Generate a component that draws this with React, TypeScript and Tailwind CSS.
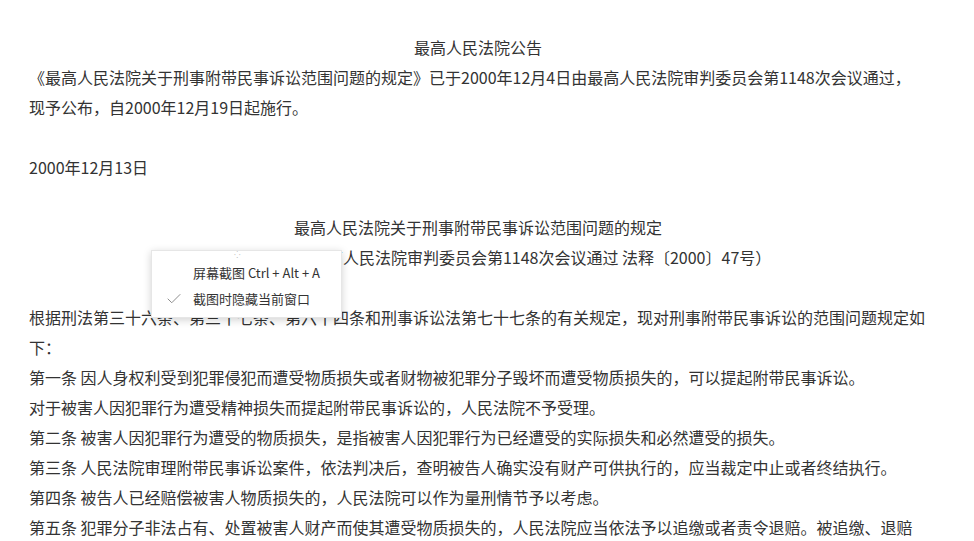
import { Check } from 'lucide-react';

const FONT = { fontFamily: '"Microsoft YaHei", "Noto Sans CJK SC", "Noto Sans", sans-serif' };

function Line({ children, center }: { children?: React.ReactNode; center?: boolean }) {
  return (
    <p className={`h-[30px] leading-[30px] whitespace-nowrap ${center ? 'text-center' : ''}`}>
      {children}
    </p>
  );
}

function ScreenshotMenu() {
  return (
    <div className="absolute left-[151px] top-[250px] w-[191px] h-[68px] bg-white border border-[#e6e6e6] shadow-[0_2px_8px_rgba(0,0,0,0.18)] text-[13px] text-[#333]">
      <div className="absolute left-[82px] top-0 text-[8px] leading-[8px] text-[#bbb]">⁘</div>
      <div className="h-[34px] pt-[13px] pl-[41px] leading-[18px]">屏幕截图 Ctrl + Alt + A</div>
      <div className="flex items-center h-[28px] pl-[13px] leading-[18px]">
        <Check size={18} strokeWidth={1.3} className="text-[#8a8a8a] mr-[10px]" />
        <span>截图时隐藏当前窗口</span>
      </div>
    </div>
  );
}

export default function App() {
  return (
    <div className="relative min-h-screen bg-white text-[#333] text-[16px]" style={FONT}>
      <div className="w-[898px] ml-[29px] pt-[32px]">
        <Line center>最高人民法院公告</Line>
        <Line>《最高人民法院关于刑事附带民事诉讼范围问题的规定》已于2000年12月4日由最高人民法院审判委员会第1148次会议通过，</Line>
        <Line>现予公布，自2000年12月19日起施行。</Line>
        <Line />
        <Line>2000年12月13日</Line>
        <Line />
        <Line center>最高人民法院关于刑事附带民事诉讼范围问题的规定</Line>
        <Line center>（2000年12月4日最高人民法院审判委员会第1148次会议通过 法释〔2000〕47号）</Line>
        <Line />
        <Line>根据刑法第三十六条、第三十七条、第六十四条和刑事诉讼法第七十七条的有关规定，现对刑事附带民事诉讼的范围问题规定如</Line>
        <Line>下：</Line>
        <Line>第一条 因人身权利受到犯罪侵犯而遭受物质损失或者财物被犯罪分子毁坏而遭受物质损失的，可以提起附带民事诉讼。</Line>
        <Line>对于被害人因犯罪行为遭受精神损失而提起附带民事诉讼的，人民法院不予受理。</Line>
        <Line>第二条 被害人因犯罪行为遭受的物质损失，是指被害人因犯罪行为已经遭受的实际损失和必然遭受的损失。</Line>
        <Line>第三条 人民法院审理附带民事诉讼案件，依法判决后，查明被告人确实没有财产可供执行的，应当裁定中止或者终结执行。</Line>
        <Line>第四条 被告人已经赔偿被害人物质损失的，人民法院可以作为量刑情节予以考虑。</Line>
        <Line>第五条 犯罪分子非法占有、处置被害人财产而使其遭受物质损失的，人民法院应当依法予以追缴或者责令退赔。被追缴、退赔</Line>
        <Line>的情况，人民法院可以作为量刑情节予以考虑。</Line>
      </div>
      <ScreenshotMenu />
    </div>
  );
}
